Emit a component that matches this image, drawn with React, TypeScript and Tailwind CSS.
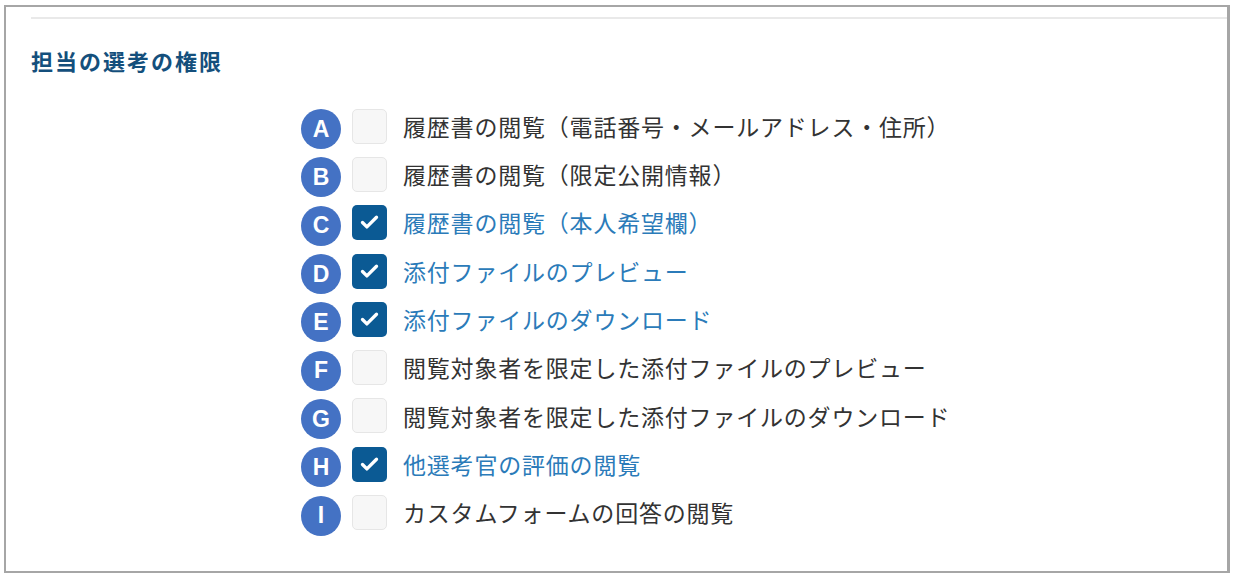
import { Check } from 'lucide-react'

const items = [
  { key: 'A', label: '履歴書の閲覧（電話番号・メールアドレス・住所）', checked: false },
  { key: 'B', label: '履歴書の閲覧（限定公開情報）', checked: false },
  { key: 'C', label: '履歴書の閲覧（本人希望欄）', checked: true },
  { key: 'D', label: '添付ファイルのプレビュー', checked: true },
  { key: 'E', label: '添付ファイルのダウンロード', checked: true },
  { key: 'F', label: '閲覧対象者を限定した添付ファイルのプレビュー', checked: false },
  { key: 'G', label: '閲覧対象者を限定した添付ファイルのダウンロード', checked: false },
  { key: 'H', label: '他選考官の評価の閲覧', checked: true },
  { key: 'I', label: 'カスタムフォームの回答の閲覧', checked: false },
]

export default function App() {
  return (
    <div
      className="h-[577px] w-[1234px] bg-white pl-[4px] pt-[5px]"
      style={{ fontFamily: '"Noto Sans CJK JP", "Noto Sans", sans-serif' }}
    >
      <div className="h-[568px] w-[1226px] border-2 border-r-[3px] border-[#a6a6a6] pl-[25px] pt-[10px]">
        <div className="h-[2px] bg-[#e9e9e9]" />
        <h2 className="mt-[27px] text-[22px] leading-[28px] font-bold tracking-[2px] text-[#144f7c]">
          担当の選考の権限
        </h2>
        <ul className="mt-[28px] pl-[270px]">
          {items.map((item) => (
            <li key={item.key} className="flex h-[48.3px] items-center">
              <span className="mt-[6px] flex h-[40px] w-[40px] items-center justify-center rounded-full bg-[#4472c4] text-[23px] font-bold text-white"
                style={{ fontFamily: '"Liberation Sans", Arial, sans-serif' }}>
                {item.key}
              </span>
              <span
                className={
                  item.checked
                    ? 'ml-[11px] flex h-[35px] w-[35px] items-center justify-center rounded-[5px] bg-[#0b5a94]'
                    : 'ml-[11px] h-[35px] w-[35px] rounded-[5px] border-[1.5px] border-[#e6e6e6] bg-[#f7f7f7]'
                }
              >
                {item.checked && <Check className="h-[21px] w-[21px] text-white" strokeWidth={3.8} />}
              </span>
              <span
                className={
                  'ml-[16px] text-[23px] tracking-[0.8px] ' +
                  (item.checked ? 'text-[#2b7bb9]' : 'text-[#333333]')
                }
              >
                {item.label}
              </span>
            </li>
          ))}
        </ul>
      </div>
    </div>
  )
}
